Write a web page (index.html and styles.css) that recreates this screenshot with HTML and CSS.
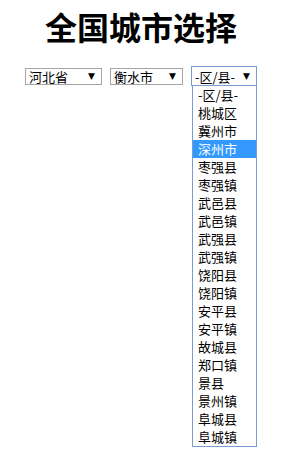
FILE: index.html
```html
<!DOCTYPE html>
<html lang="zh-CN">
<head>
  <meta charset="UTF-8">
  <meta name="viewport" content="width=device-width, initial-scale=1">
  <title>全国城市选择</title>
  <link rel="stylesheet" href="styles.css">
</head>
<body>
  <div class="page">
    <h1 class="title">全国城市选择</h1>
    <div class="pickers">
      <div class="picker picker-province">
        <span class="picker-text">河北省</span>
        <span class="picker-arrow">▼</span>
      </div>
      <div class="picker picker-city">
        <span class="picker-text">衡水市</span>
        <span class="picker-arrow">▼</span>
      </div>
      <div class="picker-wrap">
        <div class="picker picker-area">
          <span class="picker-text">-区/县-</span>
          <span class="picker-arrow">▼</span>
        </div>
        <ul class="options">
          <li>-区/县-</li>
          <li>桃城区</li>
          <li>冀州市</li>
          <li class="selected">深州市</li>
          <li>枣强县</li>
          <li>枣强镇</li>
          <li>武邑县</li>
          <li>武邑镇</li>
          <li>武强县</li>
          <li>武强镇</li>
          <li>饶阳县</li>
          <li>饶阳镇</li>
          <li>安平县</li>
          <li>安平镇</li>
          <li>故城县</li>
          <li>郑口镇</li>
          <li>景县</li>
          <li>景州镇</li>
          <li>阜城县</li>
          <li>阜城镇</li>
        </ul>
      </div>
    </div>
  </div>
</body>
</html>
```

FILE: styles.css
```css
* {
  margin: 0;
  padding: 0;
  box-sizing: border-box;
}
body {
  background: #fff;
  color: #000;
  font-family: "Noto Sans CJK SC", "Noto Sans", sans-serif;
}
.page {
  width: 282px;
}
.title {
  margin-top: 5px;
  font-size: 32px;
  line-height: 42px;
  font-weight: bold;
  text-align: center;
}
.pickers {
  display: flex;
  justify-content: center;
  align-items: flex-start;
  gap: 8px;
  margin-top: 21px;
}
.picker {
  display: flex;
  align-items: center;
  justify-content: space-between;
  height: 17px;
  padding: 0 6px 0 3px;
  border: 1px solid #a6a6a6;
  font-size: 13px;
  line-height: 15px;
}
.picker-province {
  width: 77px;
}
.picker-city {
  width: 73px;
}
.picker-wrap {
  width: 66px;
  margin-top: -2px;
}
.picker-area {
  height: 20px;
  border-color: #7a9cd3;
}
.picker-arrow {
  font-size: 9px;
  font-family: "DejaVu Sans", sans-serif;
}
.options {
  width: 65px;
  margin-left: 1px;
  list-style: none;
  background: #fff;
  border: 1px solid #7a9cd3;
  border-top: none;
}
.options li {
  height: 18px;
  line-height: 18px;
  padding-left: 5px;
  font-size: 13px;
  white-space: nowrap;
}
.options li.selected {
  background: #3399ff;
  color: #fff;
}
```
